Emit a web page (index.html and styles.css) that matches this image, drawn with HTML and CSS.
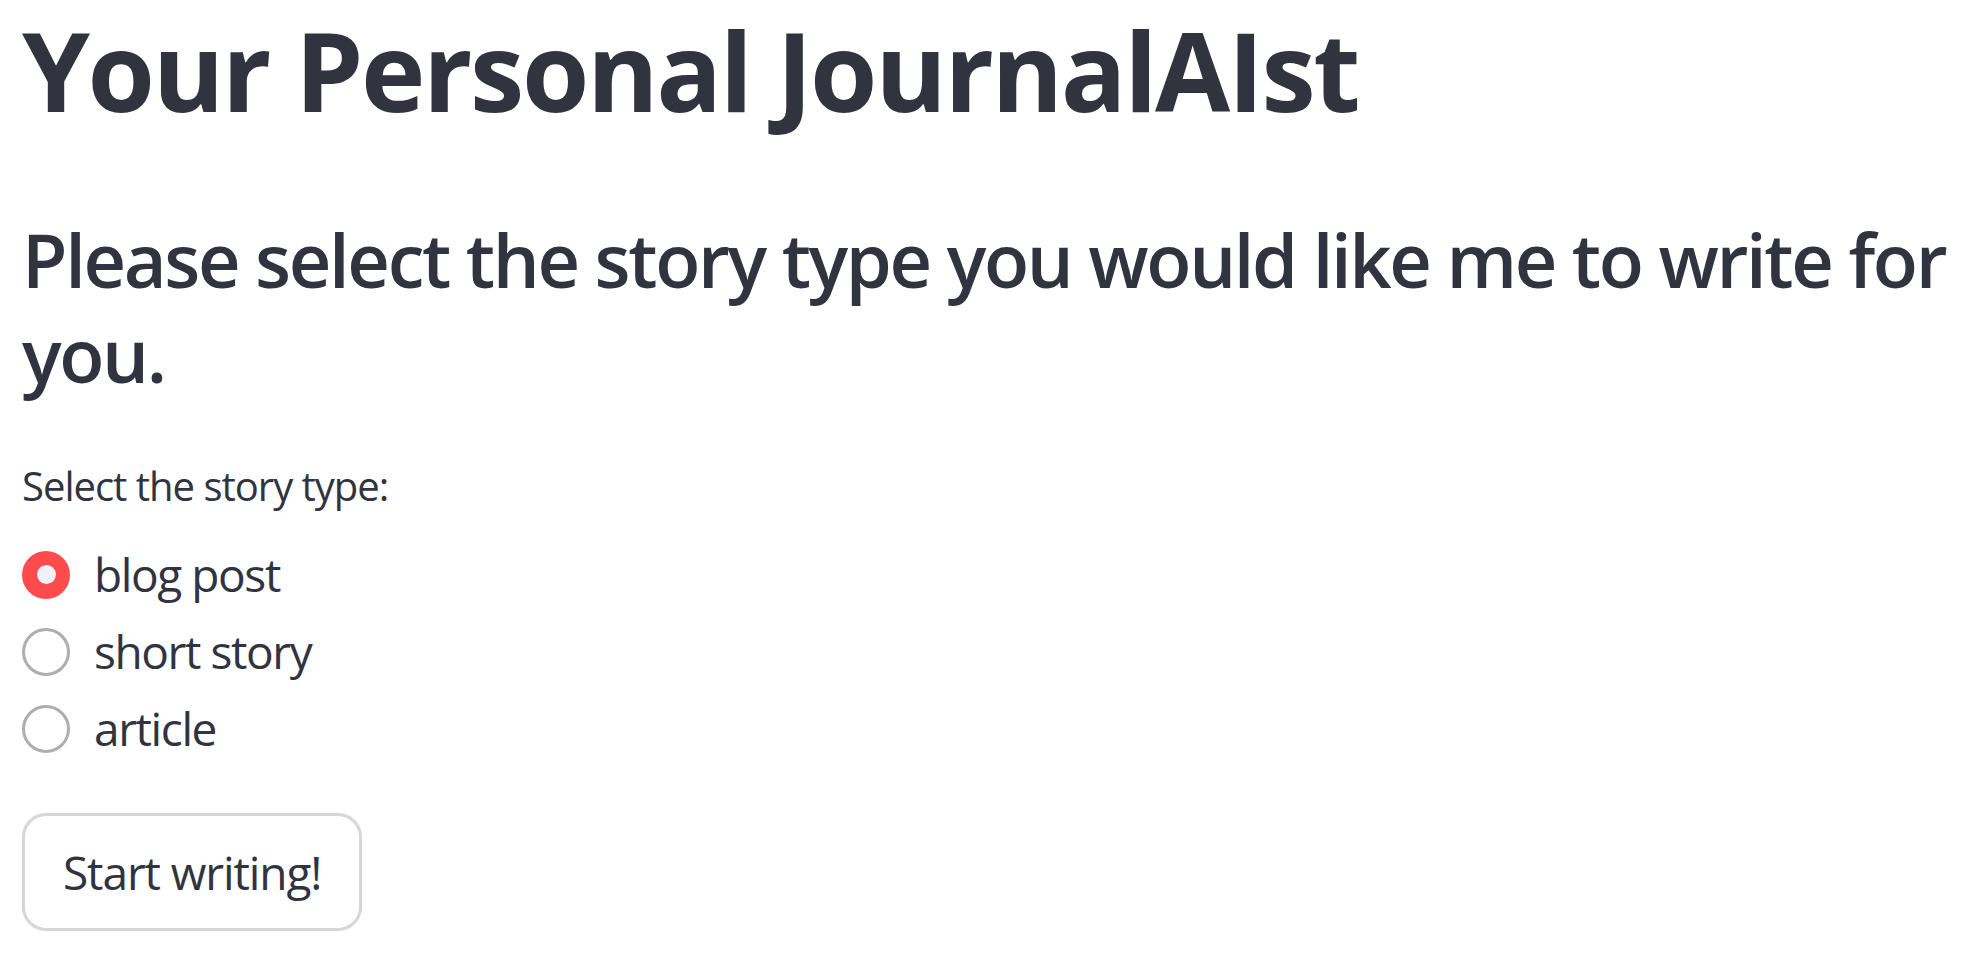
FILE: index.html
```html
<!DOCTYPE html>
<html lang="en">
<head>
<meta charset="utf-8">
<title>Your Personal JournalAIst</title>
<link rel="stylesheet" href="styles.css">
</head>
<body>
<main class="app">
  <h1 class="title">Your Personal JournalAIst</h1>
  <h2 class="subtitle">Please select the story type you would like me to write for you.</h2>
  <div class="radio-group" role="radiogroup">
    <div class="radio-label">Select the story type:</div>
    <label class="radio-option">
      <span class="radio-circle checked"></span>
      <span class="radio-text">blog post</span>
    </label>
    <label class="radio-option">
      <span class="radio-circle"></span>
      <span class="radio-text">short story</span>
    </label>
    <label class="radio-option">
      <span class="radio-circle"></span>
      <span class="radio-text">article</span>
    </label>
  </div>
  <button class="btn" type="button">Start writing!</button>
</main>
</body>
</html>
```
FILE: styles.css
```css
html, body {
  margin: 0;
  padding: 0;
  background: #ffffff;
}

body {
  font-family: "Open Sans", "Noto Sans", sans-serif;
  color: #31333f;
}

.app {
  padding: 0 22px;
  display: flex;
  flex-direction: column;
  align-items: flex-start;
}

.title {
  margin: 0;
  padding-right: 6px;
  font-size: 109px;
  font-weight: 700;
  line-height: 140px;
  letter-spacing: -2.4px;
}

.subtitle {
  margin: 72px 0 0 0;
  padding-right: 4px;
  font-size: 74px;
  font-weight: 600;
  line-height: 95px;
  letter-spacing: -2.35px;
}

.radio-group {
  margin-top: 54px;
  display: flex;
  flex-direction: column;
}

.radio-label {
  font-size: 40px;
  line-height: 60px;
  letter-spacing: -1px;
  margin-bottom: 20px;
}

.radio-option {
  display: flex;
  align-items: center;
  height: 77px;
  gap: 24px;
  cursor: pointer;
}

.radio-circle {
  box-sizing: border-box;
  width: 48px;
  height: 48px;
  border-radius: 50%;
  border: 3px solid #adadb2;
  background: #ffffff;
  display: flex;
  align-items: center;
  justify-content: center;
  flex-shrink: 0;
}

.radio-circle.checked {
  border: none;
  background: #ff4b4b;
}

.radio-circle.checked::after {
  content: "";
  width: 19px;
  height: 19px;
  border-radius: 50%;
  background: #f0f2f6;
}

.radio-text {
  font-size: 46px;
  line-height: 77px;
  letter-spacing: -1.4px;
}

.btn {
  margin-top: 46px;
  box-sizing: border-box;
  height: 118px;
  padding: 0 38px;
  border: 3px solid #d6d6d9;
  border-radius: 24px;
  background: #ffffff;
  color: #31333f;
  font-family: "Open Sans", "Noto Sans", sans-serif;
  font-size: 46px;
  line-height: 77px;
  letter-spacing: -1.1px;
  cursor: pointer;
}
```
